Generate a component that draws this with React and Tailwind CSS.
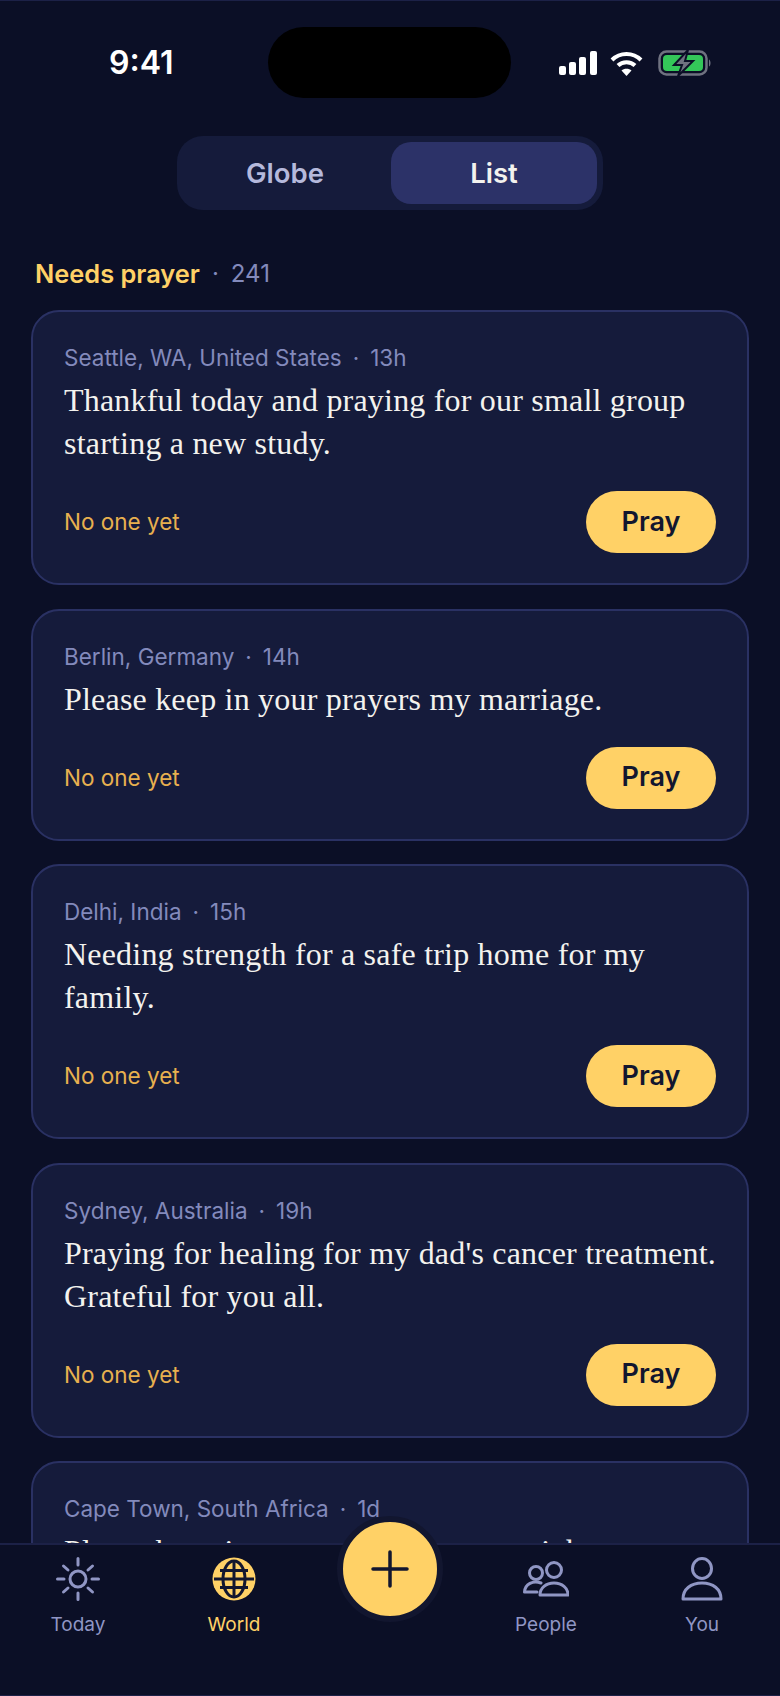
const cards = [
  { place: 'Seattle, WA, United States', age: '13h', text: 'Thankful today and praying for our small group starting a new study.' },
  { place: 'Berlin, Germany', age: '14h', text: 'Please keep in your prayers my marriage.' },
  { place: 'Delhi, India', age: '15h', text: 'Needing strength for a safe trip home for my family.' },
  { place: 'Sydney, Australia', age: '19h', text: "Praying for healing for my dad's cancer treatment. Grateful for you all." },
  { place: 'Cape Town, South Africa', age: '1d', text: 'Please keep in your prayers my new job.', hideFooter: true },
];

const sans = "font-['Inter',sans-serif]";

function StatusIcons() {
  return (
    <div className="flex items-center gap-[13px]">
      <svg width="38" height="24" viewBox="0 0 38 24" fill="#fff">
        <rect x="0" y="15" width="7" height="9" rx="2" />
        <rect x="10" y="11" width="7" height="13" rx="2" />
        <rect x="20" y="6" width="7" height="18" rx="2" />
        <rect x="31" y="0" width="7" height="24" rx="2" />
      </svg>
      <svg width="33" height="25" viewBox="0 0 33 25" fill="none" stroke="#fff" strokeWidth="4">
        <path d="M2 9 C10 1 23 1 31 9" />
        <path d="M8 14.5 C12.500 10 20.500 10 25 14.500" />
        <path d="M16.500 25 L11.500 19.500 C14 17 19 17 21.500 19.500 Z" fill="#fff" stroke="none" />
      </svg>
      <svg width="54" height="26" viewBox="0 0 54 26" fill="none" className="ml-[2px]">
        <rect x="1.500" y="1.500" width="47" height="23" rx="7" stroke="#6f7280" strokeWidth="2.500" />
        <rect x="5" y="5" width="40" height="16" rx="4" fill="#34c759" />
        <path d="M51 9.500 C53 10.500 53 15.500 51 16.500 Z" fill="#6f7280" />
        <path d="M30 0 L16 15 H24 L20 26 L35 11 H27 Z" fill="#6f7280" stroke="#0b0f26" strokeWidth="2" />
      </svg>
    </div>
  );
}

function Card({ place, age, text, hideFooter }) {
  return (
    <div className="rounded-[28px] border-2 border-[#2a3163] bg-[#151b3b] pt-[31px] pr-[31px] pb-[30px] pl-[31px]">
      <div className={`${sans} flex items-center text-[22.5px] leading-[30px] text-[#838abc]`}>
        <span>{place}</span>
        <span className="mx-[11px]">·</span>
        <span>{age}</span>
      </div>
      <p className="mt-[6px] -mr-[4px] font-['Liberation_Serif',serif] text-[32px] leading-[43px] tracking-[0.2px] text-[#f3f2ee]">{text}</p>
      {/* la ultima tarjeta queda tapada por la barra */}
      {!hideFooter && (
        <div className="mt-[26px] flex items-center justify-between">
          <span className={`${sans} text-[22.5px] text-[#e8b04f]`}>No one yet</span>
          <button className={`${sans} flex h-[62px] w-[130px] items-center justify-center rounded-[31px] bg-[#ffd166] text-[27px] font-semibold text-[#12162f]`}>Pray</button>
        </div>
      )}
    </div>
  );
}

function NavItem({ label, active, children }) {
  return (
    <div className={`${sans} flex w-[100px] flex-col items-center gap-[9px] text-[19px] ${active ? 'text-[#ffd166]' : 'text-[#9096c4]'}`}>
      <div className="flex h-[46px] w-full items-center justify-center">{children}</div>
      <span>{label}</span>
    </div>
  );
}

export default function App() {
  return (
    <div className="relative flex h-[1696px] w-[780px] flex-col overflow-hidden border-y border-[#1c2147] bg-[#0b0f26]">
      <div className="grid h-[135px] shrink-0 grid-cols-[268px_243px_1fr] pt-[26px]">
        <span className="mt-[15px] pl-[109px] text-[32px] leading-[42px] font-semibold text-white font-['Inter',sans-serif]">9:41</span>
        <div className="h-[71px] rounded-[36px] bg-black" />
        <div className="mt-[23px] pl-[48px]"><StatusIcons /></div>
      </div>

      <div className="flex shrink-0 justify-center">
        <div className={`${sans} flex h-[74px] w-[426px] items-center rounded-[26px] bg-[#151b3b] p-[6px] text-[27.5px] font-semibold`}>
          <div className="flex-1 pt-[2px] pr-[4px] text-center text-[#b5b9dc]">Globe</div>
          <div className="flex h-[62px] w-[206px] items-center justify-center rounded-[20px] bg-[#2c3268] pt-[2px] text-[#f3f2ee]">List</div>
        </div>
      </div>

      <div className={`${sans} mt-[46px] ml-[35px] flex shrink-0 items-center leading-[36px]`}>
        <span className="text-[25.400px] font-semibold text-[#ffd166]">Needs prayer</span>
        <span className="mx-[12px] text-[24px] text-[#838abc]">·</span>
        <span className="text-[24px] text-[#838abc]">241</span>
      </div>

      <div className="mt-[18px] min-h-0 flex-1 overflow-hidden px-[31px]">
        <div className="flex flex-col gap-[23.500px]">
          {cards.map(c => <Card key={c.place} {...c} />)}
        </div>
      </div>

      <div className="flex h-[152px] shrink-0 items-start justify-between border-t-2 border-[#1c2147] bg-[#0b0f26] px-[28px] pt-[11px]">
        <NavItem label="Today">
          <svg width="44" height="44" viewBox="0 0 44 44" fill="none" stroke="#9096c4" strokeWidth="3" strokeLinecap="round">
            <circle cx="22" cy="22" r="8" />
            <path d="M22 1.500v6.500M22 36v6.500M1.500 22h6.500M36 22h6.500M7.500 9l4.500 4M36.500 9l-4.500 4M7.500 35l4.500-4M36.500 35l-4.500-4" />
          </svg>
        </NavItem>
        <NavItem label="World" active>
          <svg width="44" height="44" viewBox="0 0 44 44" fill="none" stroke="#12162f" strokeWidth="3">
            <circle cx="22" cy="22" r="21.500" fill="#ffd166" stroke="none" />
            <path d="M2 22h40M8 13.500h28M8 30.500h28" />
            <ellipse cx="22" cy="22" rx="11" ry="18" />
            <path d="M22 4v36" />
          </svg>
        </NavItem>
        <div className="w-[100px]" />
        <NavItem label="People">
          <svg width="46" height="40" viewBox="0 0 46 40" fill="none" stroke="#9096c4" strokeWidth="3" strokeLinejoin="round" strokeLinecap="round">
            <circle cx="13" cy="14" r="6.500" />
            <circle cx="31" cy="11" r="7.500" />
            <path d="M17 36h28C45 29 39 24 31 24S17 29 17 36Z" />
            <path d="M18 24C10 21 2 25 1.500 33H14" />
          </svg>
        </NavItem>
        <NavItem label="You">
          <svg width="42" height="44" viewBox="0 0 42 44" fill="none" stroke="#9096c4" strokeWidth="3" strokeLinejoin="round">
            <ellipse cx="21" cy="11.500" rx="9.500" ry="10" />
            <path d="M2 42C2 32 10 26 21 26S40 32 40 42Z" />
          </svg>
        </NavItem>
      </div>

      <div className="absolute top-[1515px] left-[337px] flex h-[106px] w-[106px] items-center justify-center rounded-full border-[6px] border-[#12162f] bg-[#ffd166]">
        <svg width="38" height="38" viewBox="0 0 38 38" stroke="#12162f" strokeWidth="3.500" strokeLinecap="round">
          <path d="M19 2v34M2 19h34" />
        </svg>
      </div>
    </div>
  );
}
